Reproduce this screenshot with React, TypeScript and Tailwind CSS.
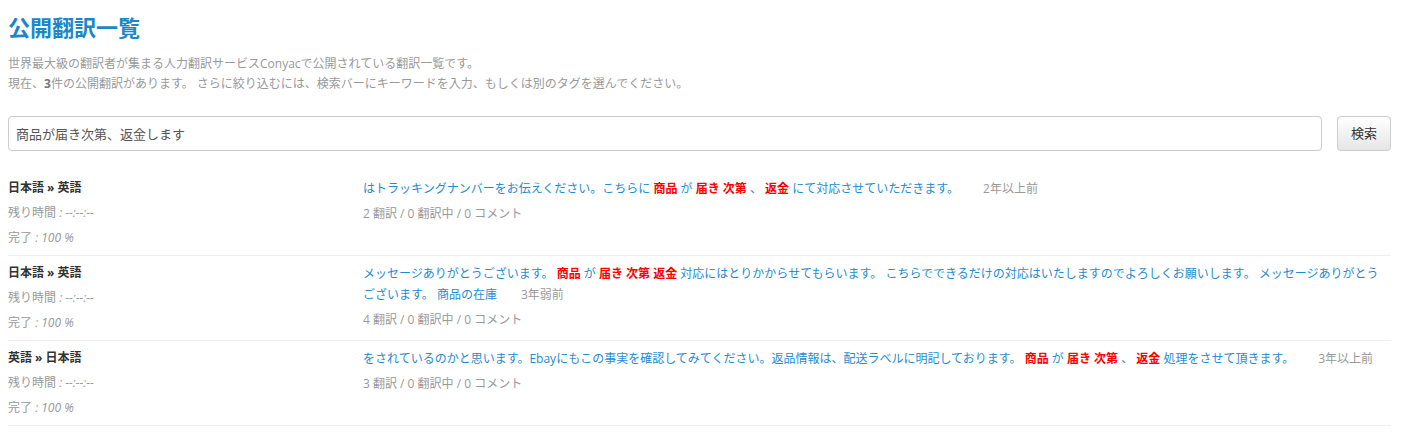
import { ReactNode } from "react"

const font = { fontFamily: '"Open Sans", "Noto Sans CJK JP", sans-serif' }

function Hit({ children }: { children: ReactNode }) {
  return <span className="font-bold text-[#ff0000]">{children}</span>
}

interface Row {
  pair: string
  body: ReactNode
  ago: string
  count: string
}

const rows: Row[] = [
  {
    pair: "日本語 » 英語",
    body: (
      <>
        はトラッキングナンバーをお伝えください。こちらに <Hit>商品</Hit> が <Hit>届き</Hit> <Hit>次第</Hit> 、 <Hit>返金</Hit> にて対応させていただきます。
      </>
    ),
    ago: "2年以上前",
    count: "2 翻訳 / 0 翻訳中 / 0 コメント",
  },
  {
    pair: "日本語 » 英語",
    body: (
      <>
        メッセージありがとうございます。 <Hit>商品</Hit> が <Hit>届き</Hit> <Hit>次第</Hit> <Hit>返金</Hit> 対応にはとりかからせてもらいます。 こちらでできるだけの対応はいたしますのでよろしくお願いします。 メッセージありがとうございます。 商品の在庫
      </>
    ),
    ago: "3年弱前",
    count: "4 翻訳 / 0 翻訳中 / 0 コメント",
  },
  {
    pair: "英語 » 日本語",
    body: (
      <>
        をされているのかと思います。Ebayにもこの事実を確認してみてください。返品情報は、配送ラベルに明記しております。 <Hit>商品</Hit> が <Hit>届き</Hit> <Hit>次第</Hit> 、 <Hit>返金</Hit> 処理をさせて頂きます。
      </>
    ),
    ago: "3年以上前",
    count: "3 翻訳 / 0 翻訳中 / 0 コメント",
  },
]

export default function App() {
  return (
    <div className="min-h-screen bg-white px-2 pt-[12px]" style={font}>
      {/* header */}
      <h1 className="text-[22px] font-bold leading-[30px] text-[#1a87c9]">公開翻訳一覧</h1>
      <div className="mt-3 text-[12px] leading-[20px] text-[#999]">
        <p>世界最大級の翻訳者が集まる人力翻訳サービスConyacで公開されている翻訳一覧です。</p>
        <p>
          現在、<b className="text-[#777]">3</b>件の公開翻訳があります。 さらに絞り込むには、検索バーにキーワードを入力、もしくは別のタグを選んでください。
        </p>
      </div>

      {/* search */}
      <div className="mt-[22px] flex w-[1383px] gap-[15px]">
        <input
          defaultValue="商品が届き次第、返金します"
          className="h-[35px] flex-1 rounded-[4px] border border-[#ccc] px-[7px] text-[13px] text-[#555] outline-none"
          style={font}
        />
        <button className="h-[35px] w-[54px] rounded-[4px] border border-[#ccc] bg-gradient-to-b from-white to-[#e6e6e6] text-[13px] text-[#333]">
          検索
        </button>
      </div>

      {/* results */}
      <div className="mt-[20px] w-[1383px]">
        {rows.map((r, i) => (
          <div key={i} className="flex border-b border-[#eee] pt-1 pb-[5px]">
            <div className="w-[355px] shrink-0 text-[12px] leading-[25px]">
              <div className="font-bold text-[#333]">{r.pair}</div>
              <div className="text-[#999]">
                残り時間 <i>: --:--:--</i>
              </div>
              <div className="text-[#999]">
                完了 <i>: 100 %</i>
              </div>
            </div>
            <div className="flex-1 pt-[3px] pr-[10px] text-[12px] leading-[21px]">
              <p className="text-[#1e8cd3]">
                {r.body}
                <span className="ml-6 text-[#999]">{r.ago}</span>
              </p>
              <p className="mt-[4px] text-[#999]">{r.count}</p>
            </div>
          </div>
        ))}
      </div>
    </div>
  )
}
